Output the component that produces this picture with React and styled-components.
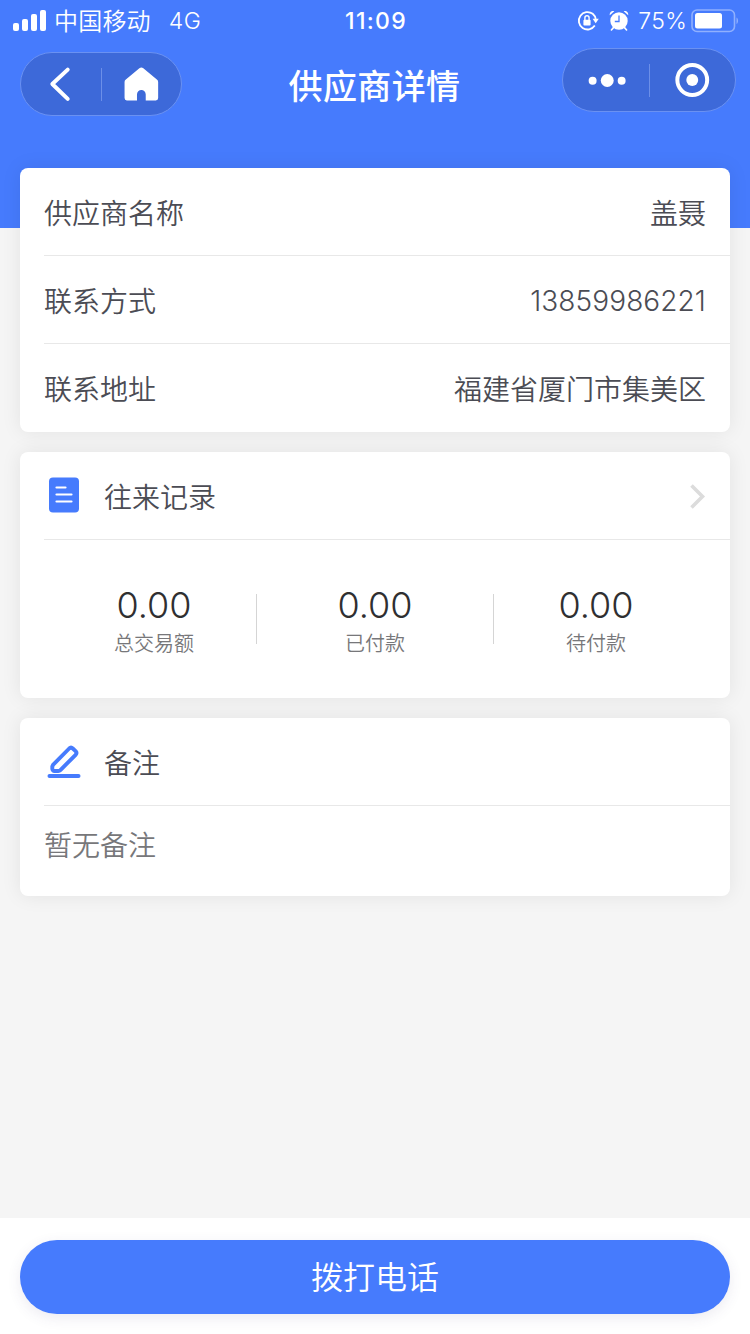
import React from 'react';
import styled, { createGlobalStyle } from 'styled-components';

const GlobalStyle = createGlobalStyle`
    * {
        box-sizing: border-box;
    }

    body {
        margin: 0;
        background: #f5f5f5;
        font-family: Inter, "Noto Sans CJK SC", sans-serif;
    }
`;

const Page = styled.div`
    display: flex;
    flex-direction: column;
    width: 750px;
    height: 1334px;
    overflow: hidden;
    background: #f5f5f5;
`;

const Header = styled.header`
    height: 228px;
    flex-shrink: 0;
    background: #467bfd;
    color: #fff;
`;

const StatusBar = styled.div`
    display: grid;
    grid-template-columns: 1fr auto 1fr;
    align-items: center;
    height: 40px;
    padding: 0 11px 0 13px;
    font-size: 24px;
    line-height: 40px;
`;

const StatusGroup = styled.div`
    display: flex;
    align-items: center;
    height: 40px;
    justify-content: ${props => props.$end ? 'flex-end' : 'flex-start'};
`;

const Carrier = styled.span`
    margin-left: 8px;
    padding-top: 2px;
    font-weight: 350;
    letter-spacing: 0.2px;
`;

const Network = styled.span`
    margin-left: 18px;
    padding-top: 1px;
    font-size: 23px;
    font-weight: 350;
    letter-spacing: 0.5px;
`;

const Clock = styled.span`
    padding-top: 1px;
    font-size: 23px;
    font-weight: 500;
    letter-spacing: 1.3px;
`;

const Percent = styled.span`
    margin: 0 4px 0 9px;
    padding-top: 1px;
    font-size: 23px;
    font-weight: 350;
    letter-spacing: 0.3px;
`;

const NavBar = styled.nav`
    display: grid;
    grid-template-columns: 1fr auto 1fr;
    align-items: start;
    padding: 8px 14px 0 20px;
`;

const Title = styled.h1`
    margin: 0;
    padding: 2px 7px 0 0;
    font-size: 34px;
    line-height: 74px;
    font-weight: 500;
    letter-spacing: 0.4px;
`;

const Capsule = styled.div`
    display: flex;
    align-items: center;
    width: ${props => props.$width}px;
    height: 64px;
    margin-top: ${props => props.$top || 0}px;
    justify-self: ${props => props.$end ? 'end' : 'start'};
    border: 1px solid #6a91f2;
    border-radius: 32px;
    background: #3d69d9;

    > svg {
        flex: 1;
        min-width: 0;
    }
`;

const CapsuleLine = styled.span`
    width: 1px;
    height: 33px;
    background: #6c8fe8;
`;

const Content = styled.main`
    display: flex;
    flex: 1;
    flex-direction: column;
    gap: 20px;
    margin-top: -60px;
    padding: 0 20px;
`;

const Card = styled.section`
    border-radius: 8px;
    background: #fff;
    box-shadow: 0 0 20px rgba(0, 0, 0, 0.08);
`;

const Row = styled.div`
    display: flex;
    align-items: center;
    height: 88px;
    margin-left: 24px;
    padding-right: 24px;
    border-bottom: 1px solid #e8e8e8;
    color: #4b4c54;
    font-size: 28px;
    font-weight: 350;

    &:last-child {
        border-color: transparent;
    }
`;

const Label = styled.span`
    padding-top: 4px;
    line-height: 40px;
`;

const Value = styled.span`
    margin-left: auto;
    padding-top: ${props => props.$numeric ? 2 : 4}px;
    line-height: 40px;
    font-weight: ${props => props.$numeric ? 300 : 350};
    letter-spacing: ${props => props.$numeric ? '0.1px' : 0};
`;

const IconSlot = styled.span`
    display: flex;
    width: 40px;
    height: 40px;
    margin-right: 20px;
`;

const Arrow = styled.svg`
    margin-left: auto;
`;

const Stats = styled.div`
    display: grid;
    grid-template-columns: 1fr 238px 1fr;
    height: 158px;
    padding: 42px 32px 0;
`;

const Stat = styled.div`
    display: flex;
    flex-direction: column;
    align-items: center;
`;

const StatMiddle = styled(Stat)`
    height: 50px;
    margin-top: 12px;
    border: solid #d5d5d5;
    border-width: 0 1px;

    > :first-child {
        margin-top: -12px;
    }
`;

const Amount = styled.span`
    color: #2f2f31;
    font-size: 36px;
    line-height: 47px;
    font-weight: 300;
    white-space: nowrap;
`;

const Caption = styled.span`
    padding-top: 1px;
    color: #77777a;
    font-size: 20px;
    line-height: 28px;
    font-weight: 350;
    white-space: nowrap;
`;

const Remark = styled.p`
    height: 90px;
    margin: 0;
    padding: 20px 24px 0;
    color: #77777a;
    font-size: 28px;
    line-height: 40px;
    font-weight: 350;
`;

const Footer = styled.footer`
    height: 116px;
    flex-shrink: 0;
    padding: 22px 20px 20px;
    background: #fff;
`;

const CallButton = styled.button`
    display: block;
    width: 100%;
    height: 74px;
    padding: 2px 0 0;
    border: 0;
    border-radius: 37px;
    background: #467bfd;
    box-shadow: 0 4px 14px rgba(70, 60, 120, 0.1);
    color: #fff;
    font-family: inherit;
    font-size: 32px;
    line-height: 72px;
    font-weight: 350;
`;

const contacts = [
    { label: '供应商名称', value: '盖聂' },
    { label: '联系方式', value: '13859986221', numeric: true },
    { label: '联系地址', value: '福建省厦门市集美区' }
];

const Signal = () => (
    <svg width="33" height="22" viewBox="0 0 33 22" fill="#fff">
        <rect x="0" y="13" width="6" height="8" rx="2" />
        <rect x="9" y="9" width="6" height="12" rx="2" />
        <rect x="18" y="4" width="6" height="17" rx="2" />
        <rect x="27" y="0" width="6" height="21" rx="2" />
    </svg>
);

const RotationLock = () => (
    <svg width="22" height="22" viewBox="0 0 22 22" fill="none">
        <path d="M15.7 3.800A8.700 8.700 0 1 0 17.800 15.600M15.7 3.800A8.700 8.700 0 0 1 18.700 9" stroke="#fff" strokeWidth="1.8" />
        <path d="M15.600 8.700h6.200l-3.100 4.600z" fill="#fff" />
        <rect x="6.400" y="9.800" width="7.200" height="5.700" rx="1" fill="#fff" />
        <path d="M7.900 10V7.900a2.100 2.100 0 0 1 4.200 0V10" stroke="#fff" strokeWidth="1.4" />
    </svg>
);

const AlarmSvg = styled.svg`
    margin-left: 10px;
`;

const Alarm = () => (
    <AlarmSvg width="20" height="22" viewBox="0 0 20 22" fill="none">
        <circle cx="10" cy="11" r="8.7" fill="#fff" />
        <path d="M.8 5.200C.2 2.800 2.600.4 5.300 1.200zM19.200 5.200c.6-2.400-1.800-4.800-4.500-4z" fill="#fff" />
        <path d="M4.500 17.600L2.400 20M15.500 17.600l2.100 2.400" stroke="#fff" strokeWidth="1.6" strokeLinecap="round" />
        <path d="M10 5.500v6H5.800" stroke="#467bfd" strokeWidth="1.3" />
    </AlarmSvg>
);

const Battery = () => (
    <svg width="48" height="24" viewBox="0 0 48 24" fill="none">
        <rect x="1" y="1" width="42.5" height="21.5" rx="5" stroke="#90b0fe" strokeWidth="1.6" />
        <rect x="4" y="4" width="27" height="15.5" rx="2.5" fill="#fff" />
        <path d="M45.500 8.500c2 1 2 5.500 0 6.500z" fill="#90b0fe" />
    </svg>
);

const BackIcon = () => (
    <svg viewBox="0 0 80 62" height="62" fill="none">
        <path d="M47 16.500L31.500 31l15.500 15" stroke="#fff" strokeWidth="4" strokeLinecap="round" strokeLinejoin="round" />
    </svg>
);

const HomeIcon = () => (
    <svg viewBox="0 0 80 62" height="62" fill="#fff">
        <path d="M37.600 15.200a3.200 3.200 0 0 1 4 0L55.200 26.500a3 3 0 0 1 1.300 2.500v16.200a2.300 2.300 0 0 1-2.300 2.300H44V41.500a4.400 4.400 0 0 0-8.800 0v6H25a2.300 2.300 0 0 1-2.300-2.300V29a3 3 0 0 1 1.300-2.500z" />
    </svg>
);

const MoreIcon = () => (
    <svg viewBox="0 0 86 62" height="62" fill="#fff">
        <circle cx="29.8" cy="31.7" r="4" />
        <circle cx="44.5" cy="31.5" r="6.5" />
        <circle cx="59" cy="31.7" r="4" />
    </svg>
);

const CloseIcon = () => (
    <svg viewBox="0 0 86 62" height="62" fill="none">
        <circle cx="42.5" cy="31" r="15" stroke="#fff" strokeWidth="4" />
        <circle cx="42.5" cy="31" r="6" fill="#fff" />
    </svg>
);

const RecordIcon = () => (
    <svg width="40" height="40" viewBox="0 0 40 40" fill="none">
        <rect x="5" y="1.5" width="30" height="35" rx="4" fill="#467bfd" />
        <path d="M12.500 11.500h9M12.500 18.500h15M12.500 25.500h15" stroke="#fff" strokeWidth="2.2" strokeLinecap="round" />
    </svg>
);

const PencilIcon = () => (
    <svg width="40" height="40" viewBox="0 0 40 40" fill="none" stroke="#467bfd">
        <path d="M9 22.900L25.200 6.500a2.600 2.600 0 0 1 3.600 0l2.800 2.700a2.600 2.600 0 0 1 0 3.600L16.400 28.100a3 3 0 0 1-2.100.9H10.500a2.200 2.200 0 0 1-2.200-2.200v-2.200z" strokeWidth="3.9" strokeLinejoin="round" />
        <path d="M5.500 34h29" strokeWidth="4" strokeLinecap="round" />
    </svg>
);

export default function App() {
    return (
        <Page>
            <GlobalStyle />
            <Header>
                <StatusBar>
                    <StatusGroup>
                        <Signal />
                        <Carrier>中国移动</Carrier>
                        <Network>4G</Network>
                    </StatusGroup>
                    <Clock>11:09</Clock>
                    <StatusGroup $end>
                        <RotationLock />
                        <Alarm />
                        <Percent>75%</Percent>
                        <Battery />
                    </StatusGroup>
                </StatusBar>
                <NavBar>
                    <Capsule $width={162} $top={4}>
                        <BackIcon />
                        <CapsuleLine />
                        <HomeIcon />
                    </Capsule>
                    <Title>供应商详情</Title>
                    <Capsule $width={174} $end>
                        <MoreIcon />
                        <CapsuleLine />
                        <CloseIcon />
                    </Capsule>
                </NavBar>
            </Header>
            <Content>
                <Card>
                    {contacts.map(item => (
                        <Row key={item.label}>
                            <Label>{item.label}</Label>
                            <Value $numeric={item.numeric}>{item.value}</Value>
                        </Row>
                    ))}
                </Card>
                <Card>
                    <Row>
                        <IconSlot><RecordIcon /></IconSlot>
                        <Label>往来记录</Label>
                        <Arrow width="18" height="28" viewBox="0 0 18 28" fill="none">
                            <path d="M3.500 3.500L14.500 14.500 3.500 25.500" stroke="#dcdcdc" strokeWidth="3.6" />
                        </Arrow>
                    </Row>
                    <Stats>
                        <Stat>
                            <Amount>0.00</Amount>
                            <Caption>总交易额</Caption>
                        </Stat>
                        <StatMiddle>
                            <Amount>0.00</Amount>
                            <Caption>已付款</Caption>
                        </StatMiddle>
                        <Stat>
                            <Amount>0.00</Amount>
                            <Caption>待付款</Caption>
                        </Stat>
                    </Stats>
                </Card>
                <Card>
                    <Row>
                        <IconSlot><PencilIcon /></IconSlot>
                        <Label>备注</Label>
                    </Row>
                    <Remark>暂无备注</Remark>
                </Card>
            </Content>
            <Footer>
                <CallButton>拨打电话</CallButton>
            </Footer>
        </Page>
    );
}
